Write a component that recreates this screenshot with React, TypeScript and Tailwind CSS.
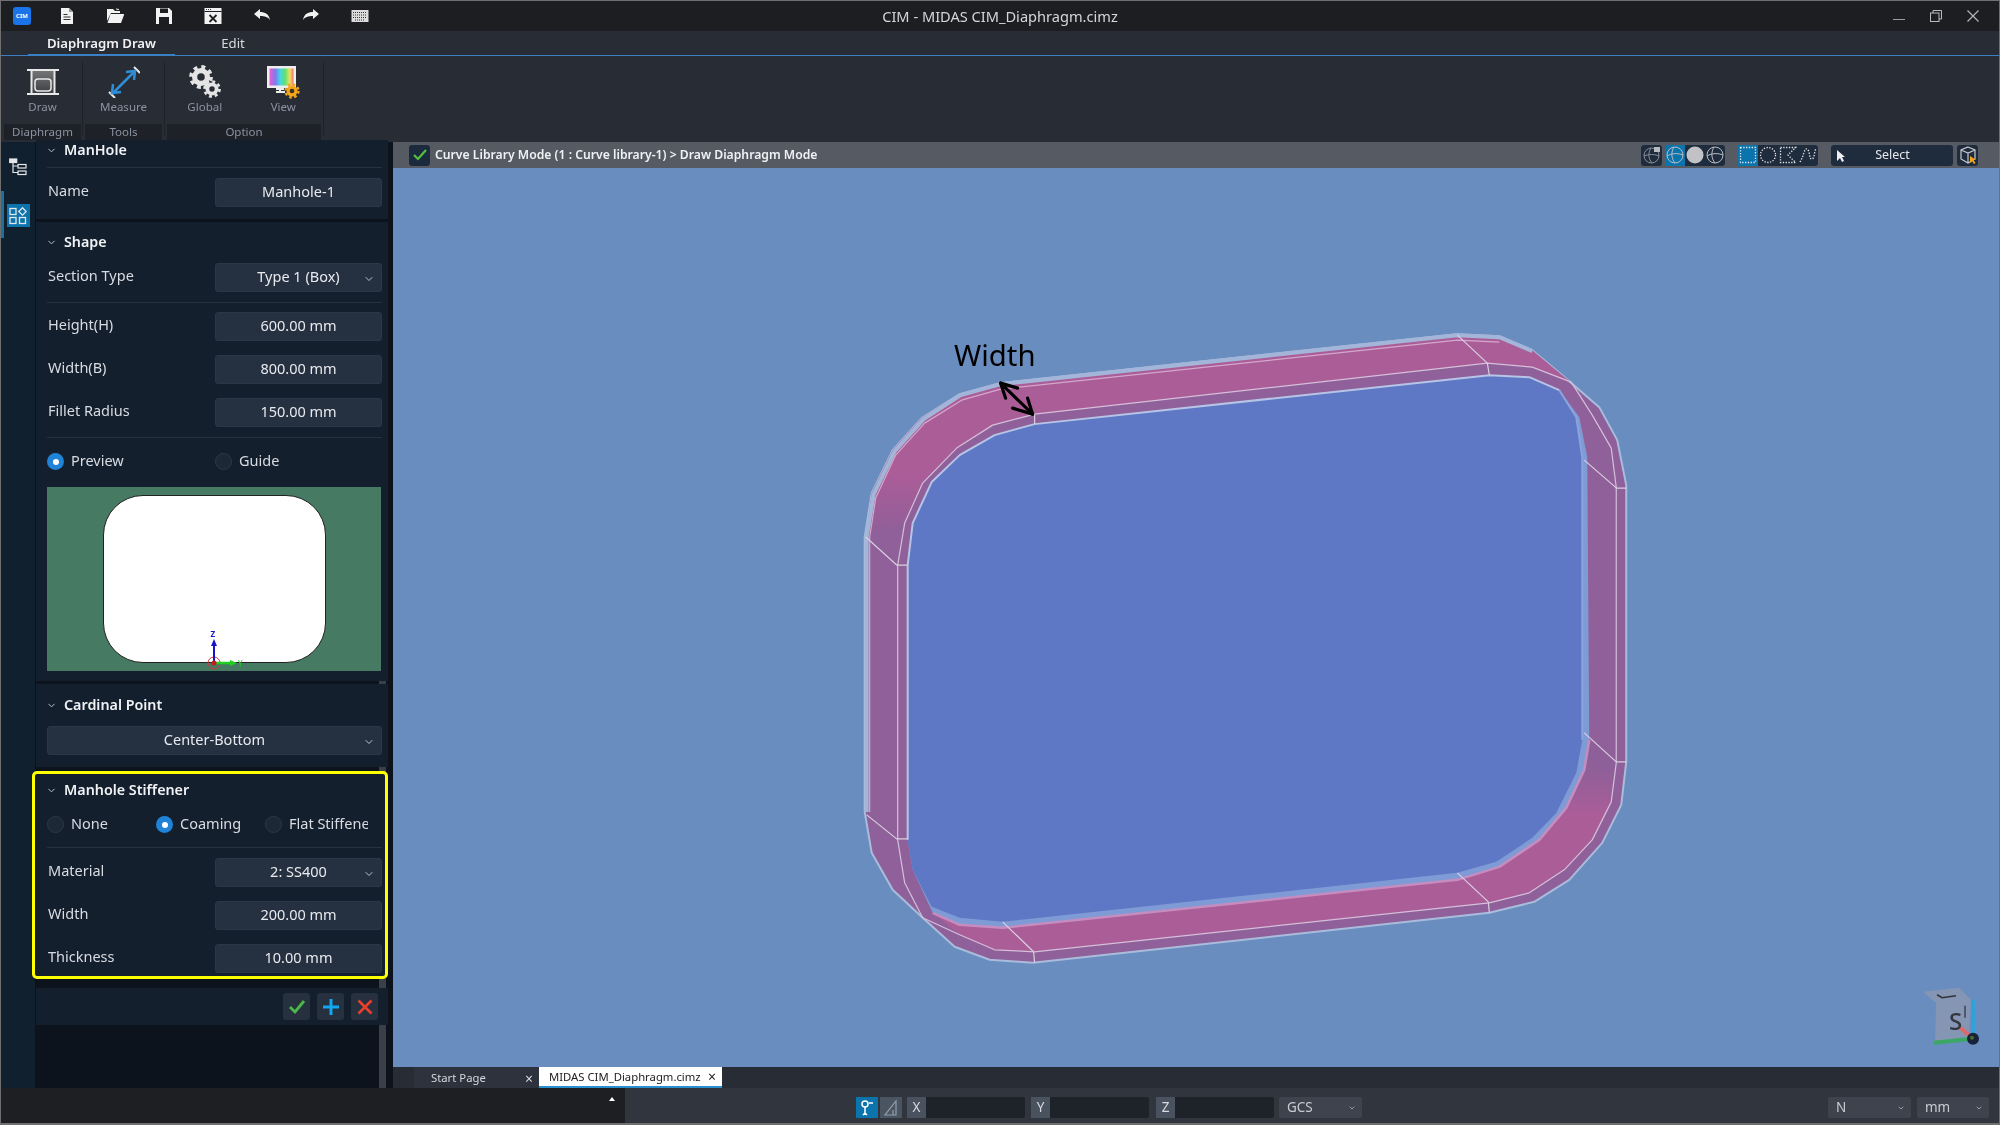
import { ChevronDown } from "lucide-react"
import type { ReactNode } from "react"

function Gear({ cx, cy, r, fill, hole }: { cx: number; cy: number; r: number; fill: string; hole: string }) {
  const c = 2 * Math.PI * (r + 1)
  const t = c / 16
  return (
    <g>
      <circle cx={cx} cy={cy} r={r} fill={fill} />
      <circle cx={cx} cy={cy} r={r + 1} fill="none" stroke={fill} strokeWidth={r * 0.42} strokeDasharray={`${t} ${t}`} />
      <circle cx={cx} cy={cy} r={r * 0.42} fill={hole} />
    </g>
  )
}

function DocIcon() {
  return (
    <svg width="18" height="18" viewBox="0 0 18 18">
      <path d="M3 1h8l4 4v12H3z" fill="#f2f2f2" />
      <path d="M11 1v4h4" fill="#9a9a9a" />
      <path d="M5.5 7.5h4M5.5 10h7M5.5 12.5h7" stroke="#333" strokeWidth="1" />
    </svg>
  )
}

function FolderIcon() {
  return (
    <svg width="18" height="18" viewBox="0 0 18 18">
      <path d="M1 2h6l2 2h5v2H5L1 14z" fill="#f2f2f2" />
      <path d="M4.5 7H18v1l-3 8H1.5z" fill="#f2f2f2" />
      <path d="M10 2l3 .5" stroke="#f2f2f2" />
    </svg>
  )
}

function SaveIcon() {
  return (
    <svg width="18" height="18" viewBox="0 0 18 18">
      <path d="M1 1h13l3 3v13H1z" fill="#f2f2f2" />
      <rect x="5" y="1.5" width="8" height="4.5" fill="#1c1e22" />
      <rect x="4" y="10" width="10" height="7" fill="#1c1e22" />
    </svg>
  )
}

function WinCloseIcon() {
  return (
    <svg width="18" height="18" viewBox="0 0 18 18">
      <rect x="0.5" y="1" width="17" height="16" fill="#f2f2f2" />
      <rect x="0.5" y="4" width="17" height="1" fill="#1c1e22" />
      <path d="M2 2.5h1M4 2.5h1M6 2.5h1" stroke="#333" />
      <path d="M5.5 8l7 7M12.500 8l-7 7" stroke="#222" strokeWidth="1.800" />
    </svg>
  )
}

function ArrowIcon({ flip }: { flip?: boolean }) {
  return (
    <svg width="18" height="18" viewBox="0 0 18 18" className={flip ? "-scale-x-100" : ""}>
      <path d="M1 7l6-5v3c5 0 9 2 10 8-2-3-5-4-10-4v3z" fill="#f2f2f2" />
    </svg>
  )
}

function KeyboardIcon() {
  return (
    <svg width="18" height="14" viewBox="0 0 18 14">
      <rect x="0.5" y="1" width="17" height="12" fill="#dcdcdc" />
      <path d="M2 3.500h14M2 6h14M2 8.500h14M4 11h10" stroke="#333" strokeWidth="1" strokeDasharray="1 1" />
    </svg>
  )
}

function DrawIcon() {
  return (
    <svg width="32" height="28" viewBox="0 0 32 28">
      <defs>
        <linearGradient id="drawfill" x1="0" y1="0" x2="0" y2="1">
          <stop offset="0" stopColor="#777" />
          <stop offset="1" stopColor="#3a3d42" />
        </linearGradient>
      </defs>
      <rect x="4" y="2" width="24" height="24" fill="url(#drawfill)" />
      <path d="M0 2h32M0 26h32" stroke="#e8e8e8" strokeWidth="2" />
      <path d="M4.500 2v24M27.500 2v24" stroke="#e8e8e8" strokeWidth="2" />
      <rect x="8" y="11" width="16" height="12" rx="3" fill="none" stroke="#e8e8e8" strokeWidth="1.500" />
    </svg>
  )
}

function MeasureIcon() {
  return (
    <svg width="32" height="32" viewBox="0 0 32 32">
      <path d="M1 26l6 6M26 1l6 6" stroke="#e8e8e8" strokeWidth="2" />
      <path d="M5 27L27 5" stroke="#2f8fd6" strokeWidth="2.500" />
      <path d="M18 6l9-1-1 9M5 18l-1 9 9-1" fill="none" stroke="#2f8fd6" strokeWidth="2.500" />
    </svg>
  )
}

function GlobalIcon() {
  return (
    <svg width="34" height="34" viewBox="0 0 34 34">
      <Gear cx={13} cy={12} r={9} fill="#e4e4e4" hole="#282c35" />
      <Gear cx={24} cy={24} r={6.500} fill="#e4e4e4" hole="#282c35" />
    </svg>
  )
}

function ViewIcon() {
  return (
    <svg width="34" height="34" viewBox="0 0 34 34">
      <defs>
        <linearGradient id="rainbow" x1="0" y1="0" x2="1" y2="0">
          <stop offset="0" stopColor="#f05ad0" />
          <stop offset="0.25" stopColor="#7a7cf0" />
          <stop offset="0.45" stopColor="#45d8e0" />
          <stop offset="0.65" stopColor="#60e070" />
          <stop offset="0.85" stopColor="#f0e060" />
          <stop offset="1" stopColor="#f07070" />
        </linearGradient>
      </defs>
      <rect x="1" y="1" width="29" height="22" fill="#eee" />
      <rect x="3.500" y="3.500" width="24" height="17" fill="url(#rainbow)" />
      <path d="M10 24h8M14 23v3M10 27h9" stroke="#eee" strokeWidth="2" />
      <Gear cx={26} cy={26} r={5.500} fill="#f4a51c" hole="#3a3020" />
    </svg>
  )
}

function TreeIcon() {
  return (
    <svg width="18" height="18" viewBox="0 0 18 18" fill="none" stroke="#e4e6ea" strokeWidth="1.200">
      <rect x="0.700" y="1" width="7" height="3.500" fill="#e4e6ea" />
      <rect x="9" y="6.500" width="8" height="3.500" />
      <rect x="9" y="13" width="8" height="3.500" />
      <path d="M4 4.500v10h5M4 8h5" />
    </svg>
  )
}

function GridIcon() {
  return (
    <svg width="18" height="18" viewBox="0 0 18 18" fill="none" stroke="#e4e6ea" strokeWidth="1.300">
      <rect x="1" y="1.500" width="6" height="6" />
      <rect x="1" y="10.500" width="6" height="6" />
      <rect x="10.500" y="10.500" width="6" height="6" />
      <path d="M13.500 0.800l3.700 3.700-3.700 3.700-3.700-3.700z" />
    </svg>
  )
}

function Sphere({ solid }: { solid?: boolean }) {
  return (
    <svg width="18" height="18" viewBox="0 0 18 18">
      {solid ? (
        <circle cx="9" cy="9" r="8.500" fill="#c0c2c6" />
      ) : (
        <g fill="none" stroke="#b9bcc2" strokeWidth="1">
          <circle cx="9" cy="9" r="8" />
          <path d="M1 10c5-3 11-3 16-1M8 1c-3 5-3 11 1 16" />
        </g>
      )}
    </svg>
  )
}

function TileIcon({ children, active }: { children: ReactNode; active?: boolean }) {
  return (
    <div className={`flex h-full w-[20px] items-center justify-center ${active ? "bg-[#0c74ac]" : ""}`}>
      <svg width="18" height="18" viewBox="0 0 18 18" fill="none" stroke="#e8e8e8" strokeWidth="1.300" strokeDasharray="1.300 1.500">
        {children}
      </svg>
    </div>
  )
}

function Viewer() {
  const outer =
    "865,537 872,493 893,450 922,418 960,394 1000,383 1457,334 1500,336 1533,350 1563,375 1600,407 1618,440 1627,485 1627,762 1622,805 1603,843 1570,880 1535,902 1490,913 1033,963 990,960 955,947 923,918 893,890 872,853 865,812"
  const edge =
    "908,565 913,523 932,482 960,455 995,435 1035,424 1490,375 1530,377 1560,390 1580,417 1588,457 1590,740 1585,770 1567,808 1540,840 1500,867 1458,880 1003,928 960,925 933,913 913,870 908,840"
  const hole =
    "908,565 913,523 932,482 960,455 995,435 1035,424 1490,375 1530,377 1560,390 1577,417 1583,457 1583,740 1577,773 1557,813 1533,838 1497,862 1458,873 1003,922 960,918 932,907 913,870 908,840"
  const fold =
    "898,565 905,523 923,483 957,448 993,425 1035,414 1488,363 1533,367 1572,382 1593,415 1612,448 1617,487 1617,763 1612,802 1593,840 1565,870 1530,893 1490,903 1035,952 995,950 960,935 923,918 905,883 898,840"
  return (
    <svg viewBox="393 168 1607 899" className="h-full w-full">
      <defs>
        <linearGradient id="topface" gradientUnits="userSpaceOnUse" x1="0" y1="475" x2="0" y2="535">
          <stop offset="0" stopColor="#ab5d98" />
          <stop offset="1" stopColor="#8f5f99" />
        </linearGradient>
        <linearGradient id="botface" gradientUnits="userSpaceOnUse" x1="0" y1="770" x2="0" y2="815">
          <stop offset="0" stopColor="#8f5f99" />
          <stop offset="1" stopColor="#ab5d98" />
        </linearGradient>
      </defs>
      <g strokeLinejoin="round" className="blur-[0.6px]">
        <polygon points={outer} fill="#8f6099" stroke="#a9bcdc" strokeWidth="2" />
        <polygon
          points="867,530 872,493 893,450 922,418 960,394 1000,383 1457,334 1500,336 1533,350 1563,375 1572,382 1533,367 1488,363 1035,414 993,425 957,448 923,483 905,523"
          fill="url(#topface)"
        />
        <polygon
          points="1617,763 1612,802 1593,840 1565,870 1530,893 1490,903 1035,952 995,950 960,935 933,913 960,925 1003,928 1458,880 1500,867 1540,840 1567,808 1585,770 1590,740"
          fill="url(#botface)"
        />
        <polygon points={edge} fill="#7f9bd6" />
        <polyline points="1590,740 1585,770 1567,808 1540,840 1500,867 1458,880 1003,928 960,925 933,913" fill="none" stroke="#c58dbf" strokeWidth="2.500" />
        <polygon points={hole} fill="#5f78c5" />
        <polyline points="1560,390 1577,417 1583,457 1583,740" fill="none" stroke="#8aa3dc" strokeWidth="2" />
        <polyline points="908,840 908,565 913,523 932,482 960,455 995,435 1035,424 1490,375 1530,377 1560,390" fill="none" stroke="#b6c4e6" strokeWidth="2" />
        <polyline points="867,812 867,537 874,494 895,451 924,419 961,395 1001,384 1458,335 1500,337 1533,351" fill="none" stroke="#a3b5d9" strokeWidth="4" />
        <polygon points={fold} fill="none" stroke="#d4c0da" strokeWidth="1.200" />
        <polyline points="870,812 870,537 876,498 896,455 925,423 962,400 1001,389 1458,340 1500,342" fill="none" stroke="#d3a8cc" strokeWidth="1.200" />
        <g stroke="#d9cfe0" strokeWidth="1.200" fill="none">
          <path d="M1458 335L1488 363L1490 375" />
          <path d="M1585 460L1615 486L1617 488H1627" />
          <path d="M1585 733L1617 762H1627" />
          <path d="M1458 873L1489 902L1490 913" />
          <path d="M1003 922L1034 952L1035 963" />
          <path d="M867 815L897 839L908 839" />
          <path d="M866 537L897 565H908" />
          <path d="M1035 414V424" />
        </g>
      </g>
      <g stroke="#000" strokeWidth="3.200" fill="none" strokeLinecap="round" strokeLinejoin="round">
        <path d="M1001 383L1033 414" />
        <path d="M1018 388L1001 383L1006 398" />
        <path d="M1013 408L1033 414L1028 398" />
      </g>
      <polygon points="1924,992 1960,988 1972,1000 1970,1038 1936,1042 1937,1003" fill="#8595b4" />
      <path d="M1938 995l5 3 14-2" stroke="#333" strokeWidth="1.500" fill="none" />
      <path d="M1966 1006v12" stroke="#3d4350" strokeWidth="1.500" fill="none" />
      <path d="M1974 1000v37" stroke="#2fa3d9" strokeWidth="4" />
      <path d="M1935 1043l38-4" stroke="#3aa864" strokeWidth="4" />
      <path d="M1960 1027l13 11" stroke="#d96b6b" strokeWidth="4" />
      <circle cx="1974" cy="1039" r="6" fill="#16233a" />
      <circle cx="1973" cy="1038" r="2" fill="#4d6b20" />
    </svg>
  )
}

function Label({ children }: { children: ReactNode }) {
  return <span className="pb-[3px] pl-[1px] text-[14.500px] text-[#d8dce2]">{children}</span>
}

function Field({ children, select, full }: { children: ReactNode; select?: boolean; full?: boolean }) {
  return (
    <div className={`relative flex h-[29px] items-center justify-center rounded-[3px] border border-[#2c3647] bg-[#253041] pb-[1px] text-[14.500px] text-[#e8eaee] ${full ? "w-full" : "w-[167px]"}`}>
      {children}
      {select && <ChevronDown size={12} strokeWidth={1.800} className="absolute right-[6px] top-[9px] text-[#d0d4da]" />}
    </div>
  )
}

function Row({ label, children, select, className }: { label: string; children: ReactNode; select?: boolean; className?: string }) {
  return (
    <div className={`flex items-center justify-between ${className ?? ""}`}>
      <Label>{label}</Label>
      <Field select={select}>{children}</Field>
    </div>
  )
}

function Heading({ children }: { children: ReactNode }) {
  return (
    <div className="-ml-[1px] flex h-[20px] items-center gap-[7px] text-[14.300px] font-semibold text-[#f0f2f4]">
      <ChevronDown size={11} strokeWidth={2} className="shrink-0 text-[#c8ccd2]" />
      {children}
    </div>
  )
}

function Radio({ on, children, className }: { on?: boolean; children: ReactNode; className?: string }) {
  return (
    <div className={`flex h-[17px] items-center gap-[7px] ${className ?? ""}`}>
      <span className={`flex h-[17px] w-[17px] shrink-0 items-center justify-center rounded-full ${on ? "bg-[#1f84d8]" : "border border-[#2d3848] bg-[#1d2837]"}`}>
        {on && <span className="h-[6px] w-[6px] rounded-full bg-white" />}
      </span>
      <span className="whitespace-nowrap pb-[1px] text-[14.500px] text-[#d8dce2]">{children}</span>
    </div>
  )
}

function RibbonButton({ icon, label, className }: { icon: ReactNode; label: string; className?: string }) {
  return (
    <div className={`flex flex-1 flex-col items-center pt-[9px] ${className ?? ""}`}>
      <div className="flex h-[34px] items-center">{icon}</div>
      <span className="mt-[-1px] text-[11.500px] leading-[18px] text-[#8a93a1]">{label}</span>
    </div>
  )
}

function StatusField({ label }: { label: string }) {
  return (
    <div className="flex h-[21px] w-[118px] items-stretch">
      <span className="flex w-[19px] items-center justify-center bg-[#4a5260] text-[13.500px] text-[#d8dce2]">{label}</span>
      <span className="flex-1 rounded-r-[2px] bg-[#1e2229]" />
    </div>
  )
}

function Dropdown({ label, className }: { label: string; className: string }) {
  return (
    <div className={`flex h-[21px] items-center justify-between rounded-[2px] bg-[#3e434d] pl-[8px] pr-[6px] text-[13.500px] text-[#c8ccd2] ${className}`}>
      {label}
      <ChevronDown size={8} strokeWidth={2} />
    </div>
  )
}

export default function App() {
  return (
    <div className="flex h-[1125px] w-[2000px] flex-col overflow-hidden border border-b-2 border-[#6f6f6f] bg-[#1c1e22] font-['Noto_Sans',sans-serif] blur-[0.35px]">
      {/* title bar */}
      <div className="grid h-[30px] shrink-0 grid-cols-[1fr_auto_1fr] items-center bg-[#1c1e22]">
        <div className="flex items-center pl-[12px]">
          <div className="flex h-[18px] w-[18px] items-center justify-center rounded-[3px] bg-[#1a73e8] text-[6px] font-bold text-white">CIM</div>
          <div className="ml-[27px]"><DocIcon /></div>
          <div className="ml-[30px]"><FolderIcon /></div>
          <div className="ml-[31px]"><SaveIcon /></div>
          <div className="ml-[31px]"><WinCloseIcon /></div>
          <div className="ml-[31px]"><ArrowIcon /></div>
          <div className="ml-[31px]"><ArrowIcon flip /></div>
          <div className="ml-[31px]"><KeyboardIcon /></div>
        </div>
        <div className="pt-[1px] text-[14.600px] text-[#d4d6da]">CIM - MIDAS CIM_Diaphragm.cimz</div>
        <div className="flex items-center justify-end gap-[25px] pr-[20px]">
          <svg width="12" height="12" viewBox="0 0 12 12"><path d="M0 9.500h12" stroke="#9a9ca0" /></svg>
          <svg width="12" height="12" viewBox="0 0 12 12" fill="none" stroke="#b8babd"><rect x="0.500" y="3" width="8.500" height="8.500" /><path d="M3 3V0.500h8.500V9H9" /></svg>
          <svg width="12" height="12" viewBox="0 0 12 12"><path d="M0.500 0.500l11 11M11.500 0.500l-11 11" stroke="#b8babd" strokeWidth="1.100" /></svg>
        </div>
      </div>

      {/* tabs */}
      <div className="flex h-[25px] shrink-0 border-b border-[#3c7fc4] bg-[#282c35] pl-[27px] text-[13.200px]">
        <div className="flex h-[25px] w-[147px] items-center justify-center border-b-2 border-[#3c7fc4] pt-[3px] font-semibold text-[#f2f2f2]">Diaphragm Draw</div>
        <div className="flex w-[116px] items-center justify-center pt-[2px] text-[#d8dadf]">Edit</div>
      </div>

      {/* ribbon */}
      <div className="flex h-[86px] shrink-0 bg-[#282c35]">
        <div className="my-[6px] w-[82px] border-r border-[#1e2128] pl-[3px] pr-[1px]">
          <div className="flex h-[62px] -mt-[6px]"><RibbonButton icon={<DrawIcon />} label="Draw" /></div>
          <div className="mt-[6px] h-[16px] bg-[#1e2128] text-center text-[11.500px] leading-[16px] text-[#8a93a1]">Diaphragm</div>
        </div>
        <div className="my-[6px] w-[82px] border-r border-[#1e2128] pl-[2px] pr-[2px]">
          <div className="flex h-[62px] -mt-[6px]"><RibbonButton icon={<MeasureIcon />} label="Measure" /></div>
          <div className="mt-[6px] h-[16px] bg-[#1e2128] text-center text-[11.500px] leading-[16px] text-[#8a93a1]">Tools</div>
        </div>
        <div className="my-[6px] w-[159px] border-r border-[#1e2128] pl-[2px] pr-[2px]">
          <div className="flex h-[62px] -mt-[6px]">
            <RibbonButton icon={<GlobalIcon />} label="Global" className="pr-[3px]" />
            <RibbonButton icon={<ViewIcon />} label="View" />
          </div>
          <div className="mt-[6px] h-[16px] bg-[#1e2128] text-center text-[11.500px] leading-[16px] text-[#8a93a1]">Option</div>
        </div>
      </div>

      {/* main */}
      <div className="flex min-h-0 flex-1">
        {/* rail */}
        <div className="relative flex w-[35px] shrink-0 flex-col items-center border-r border-[#0a111a] bg-[#10202f]">
          <span className="absolute left-0 top-[49px] h-[47px] w-[3px] bg-[#1f6f9f]" />
          <div className="mt-[16px]"><TreeIcon /></div>
          <div className="mt-[28px] flex h-[23px] w-[23px] items-center justify-center bg-[#0c74ac]"><GridIcon /></div>
        </div>

        {/* property panel */}
        <div className="relative w-[357px] shrink-0 bg-[#0c131d]">
          <div className="absolute bottom-0 left-[343px] top-[98px] w-[7px] rounded-t-[3px] bg-[#3b4048]" />
          <div className="relative w-[352px]">
            <section className="bg-[#141f2e] pb-[12px] pl-[11px] pr-[6px]">
              <div className="-mb-[2px] -mt-[2px]"><Heading>ManHole</Heading></div>
              <div className="mt-[9px] border-t border-[#27313f]" />
              <Row label="Name" className="mt-[10px]">Manhole-1</Row>
            </section>
            <section className="mt-[3px] bg-[#141f2e] pb-[10px] pl-[11px] pr-[6px] pt-[10px]">
              <Heading>Shape</Heading>
              <Row label="Section Type" select className="mt-[11px]">Type 1 (Box)</Row>
              <div className="mt-[10px] border-t border-[#27313f]" />
              <Row label="Height(H)" className="mt-[9px]">600.00 mm</Row>
              <Row label="Width(B)" className="mt-[14px]">800.00 mm</Row>
              <Row label="Fillet Radius" className="mt-[14px]">150.00 mm</Row>
              <div className="mt-[10px] border-t border-[#27313f]" />
              <div className="mt-[15px] flex">
                <Radio on className="w-[168px]">Preview</Radio>
                <Radio>Guide</Radio>
              </div>
              <div className="relative mt-[17px] flex h-[184px] w-[334px] justify-center bg-[#477a62] pt-[8px]">
                <div className="h-[168px] w-[223px] rounded-[40px] border border-[#222] bg-white" />
                <svg width="60" height="50" viewBox="0 0 60 50" className="absolute left-[147px] top-[139px]">
                  <circle cx="20" cy="37" r="6" fill="none" stroke="#c83a3a" strokeWidth="1" />
                  <path d="M20 37V18" stroke="#1515c8" strokeWidth="2" />
                  <path d="M17 20l3-7 3 7z" fill="#1515c8" />
                  <path d="M20 37h18" stroke="#20d020" strokeWidth="2.500" />
                  <path d="M36 34l7 3-7 3z" fill="#20d020" />
                  <circle cx="20" cy="37" r="2.500" fill="#c81a1a" />
                  <text x="16.500" y="11" fontSize="8" fontWeight="700" fill="#1515c8">Z</text>
                  <text x="44" y="41" fontSize="8" fill="#20d020">Y</text>
                </svg>
              </div>
            </section>
            <section className="mt-[3px] bg-[#141f2e] pb-[12px] pl-[11px] pr-[6px] pt-[11px]">
              <Heading>Cardinal Point</Heading>
              <div className="mt-[11px]"><Field select full>Center-Bottom</Field></div>
            </section>
            <section className="-ml-[4px] mt-[4px] w-[356px] rounded-[5px] border-[3px] border-[#ffff00] bg-[#141f2e] pb-[3px] pl-[12px] pr-[3px] pt-[6px]">
              <Heading>Manhole Stiffener</Heading>
              <div className="mt-[16px] flex">
                <Radio className="w-[109px]">None</Radio>
                <Radio on className="w-[109px]">Coaming</Radio>
                <Radio className="w-[103px] overflow-hidden">Flat Stiffener</Radio>
              </div>
              <div className="mt-[14px] border-t border-[#27313f]" />
              <Row label="Material" select className="mt-[10px]">2: SS400</Row>
              <Row label="Width" className="mt-[14px]">200.00 mm</Row>
              <Row label="Thickness" className="mt-[14px]">10.00 mm</Row>
            </section>
            <section className="mt-[9px] flex h-[37px] items-center justify-end gap-[7px] bg-[#141f2e] pr-[10px]">
              <button className="flex h-[27px] w-[27px] items-center justify-center rounded-[3px] bg-[#27303e]">
                <svg width="18" height="16" viewBox="0 0 18 16"><path d="M2 8l5 5 9-11" fill="none" stroke="#4cb848" strokeWidth="2.800" /></svg>
              </button>
              <button className="flex h-[27px] w-[27px] items-center justify-center rounded-[3px] bg-[#27303e]">
                <svg width="18" height="18" viewBox="0 0 18 18"><path d="M9 1v16M1 9h16" stroke="#12a6f0" strokeWidth="3" /></svg>
              </button>
              <button className="flex h-[27px] w-[27px] items-center justify-center rounded-[3px] bg-[#27303e]">
                <svg width="16" height="16" viewBox="0 0 16 16"><path d="M1.500 1.500l13 13M14.500 1.500l-13 13" stroke="#e8402a" strokeWidth="2.600" /></svg>
              </button>
            </section>
          </div>
        </div>

        {/* viewport */}
        <div className="flex min-w-0 flex-1 flex-col">
          <div className="flex h-[26px] shrink-0 items-center bg-[#565b63] pr-[21px]">
            <div className="ml-[16px] flex h-[21px] w-[21px] items-center justify-center rounded-[3px] bg-[#1b2a3c]">
              <svg width="14" height="12" viewBox="0 0 14 12"><path d="M1 6l4 4 8-9" fill="none" stroke="#56c040" strokeWidth="2.200" /></svg>
            </div>
            <span className="ml-[5px] text-[12.200px] font-semibold text-[#f0f1f3]">Curve Library Mode (1 : Curve library-1) &gt; Draw Diaphragm Mode</span>
            <div className="ml-auto flex h-[21px] items-stretch">
              <div className="flex w-[21px] items-center justify-center rounded-[3px] bg-[#1f2c3e]">
                <svg width="18" height="18" viewBox="0 0 18 18" fill="none" stroke="#8b9097">
                  <circle cx="8.500" cy="9.500" r="7.500" />
                  <path d="M1 10c5-2 10-2 15 0M8 2c-3 5-3 10 1 15" />
                  <rect x="11" y="1" width="6" height="5" fill="#b8bbc0" stroke="none" />
                </svg>
              </div>
              <div className="ml-[3px] flex w-[60px] items-stretch rounded-[3px] bg-[#1f2c3e]">
                <div className="flex w-[20px] items-center justify-center bg-[#0c74ac]"><Sphere /></div>
                <div className="flex w-[20px] items-center justify-center"><Sphere solid /></div>
                <div className="flex w-[20px] items-center justify-center"><Sphere /></div>
              </div>
              <div className="ml-[13px] flex w-[80px] items-stretch rounded-[3px] bg-[#1f2c3e]">
                <TileIcon active><rect x="1.500" y="1.500" width="15" height="15" /></TileIcon>
                <TileIcon><circle cx="9" cy="9" r="7.500" /></TileIcon>
                <TileIcon><path d="M1.500 1.500h15L9 9l7.500 7.500h-15z" /></TileIcon>
                <TileIcon><path d="M1 16C5 10 5 2 8 3s2 11 5 10 2-8 4-10" /></TileIcon>
              </div>
              <div className="relative ml-[13px] flex w-[122px] items-center justify-center rounded-[3px] bg-[#1f2c3e] pl-[1px] text-[12.500px] text-[#e6e8ea]">
                <svg width="10" height="14" viewBox="0 0 10 14" className="absolute left-[5px] top-[4px]"><path d="M1 1v11l3-3 2 4 2-1-2-4h3z" fill="#f0f0f0" /></svg>
                Select
              </div>
              <div className="ml-[4px] flex w-[21px] items-center justify-center rounded-[3px] bg-[#1f2c3e]">
                <svg width="18" height="18" viewBox="0 0 18 18" fill="none" stroke="#c6c8cc" strokeWidth="1.200">
                  <path d="M9 1l7 3v9l-7 4-7-4V4zM2 4l7 3 7-3M9 7v10" />
                  <path d="M11 10v7l2-2 2 3 1.500-1-2-3h2.500z" fill="#f4a51c" stroke="none" />
                </svg>
              </div>
            </div>
          </div>
          <div className="relative min-h-0 flex-1 bg-[#6a8dbf]">
            <Viewer />
            <span className="absolute left-[561px] top-[167px] text-[29.300px] leading-[40px] text-black">Width</span>
            <span className="absolute left-[1556px] top-[838px] text-[24px] font-medium leading-[30px] text-[#33363f]">S</span>
          </div>
          <div className="flex h-[21px] shrink-0 items-stretch bg-[#282c35] pl-[21px] text-[11.300px]">
            <div className="flex w-[125px] items-center justify-between bg-[#2d323c] pl-[17px] pr-[6px] pt-[2px] text-[#d4d7dc]">
              Start Page<span className="text-[14px] leading-[14px]">×</span>
            </div>
            <div className="flex w-[183px] items-center justify-between border-b-2 border-[#2a8fd0] bg-white pl-[10px] pr-[6px] pt-[1px] text-[#222]">
              MIDAS CIM_Diaphragm.cimz<span className="text-[14px] leading-[14px]">×</span>
            </div>
          </div>
        </div>
      </div>

      {/* status bar */}
      <div className="flex h-[35px] shrink-0 items-center bg-[#30353e] pt-[4px]">
        <div className="relative -mt-[4px] h-[35px] w-[624px] bg-[#1d1f23]">
          <span className="absolute left-[608px] top-[9px] h-0 w-0 border-x-[3px] border-b-[4px] border-x-transparent border-b-white" />
        </div>
        <div className="ml-[231px] flex h-[21px] w-[22px] items-center justify-center bg-[#0c74ac]">
          <svg width="14" height="18" viewBox="0 0 14 18" fill="none" stroke="#fff" strokeWidth="1.500"><circle cx="5" cy="5" r="3" /><path d="M5 8v8M9 4h4M5 14l-2 2M5 14l2 2" /></svg>
        </div>
        <div className="ml-[2px] flex h-[21px] w-[22px] items-center justify-center bg-[#4a5561]">
          <svg width="16" height="18" viewBox="0 0 16 18" fill="none" stroke="#8fa0b0" strokeWidth="1.200"><path d="M13 2v14H2z" /><path d="M10 11v5" /></svg>
        </div>
        <div className="ml-[5px]"><StatusField label="X" /></div>
        <div className="ml-[6px]"><StatusField label="Y" /></div>
        <div className="ml-[7px]"><StatusField label="Z" /></div>
        <div className="ml-[5px]"><Dropdown label="GCS" className="w-[83px]" /></div>
        <div className="ml-auto"><Dropdown label="N" className="w-[83px]" /></div>
        <div className="ml-[6px] mr-[10px]"><Dropdown label="mm" className="w-[72px]" /></div>
      </div>
    </div>
  )
}
